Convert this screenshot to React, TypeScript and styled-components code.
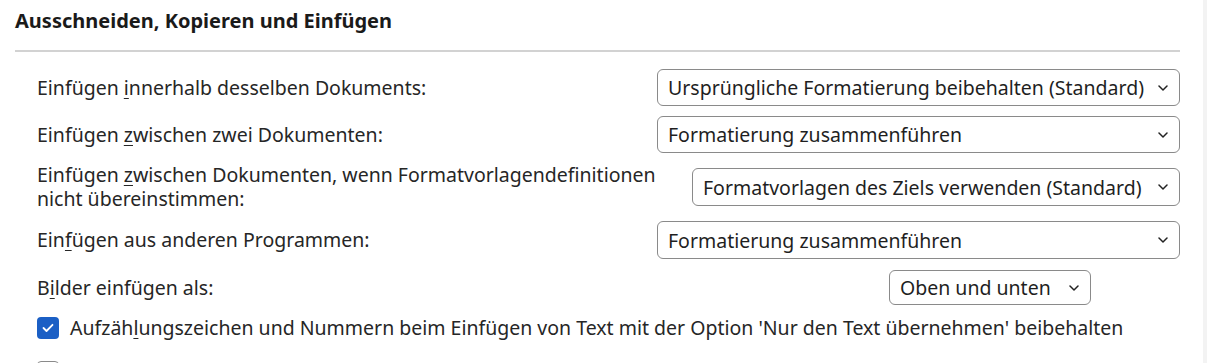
import React from "react";
import styled, { createGlobalStyle } from "styled-components";

const Global = createGlobalStyle`
  html, body { margin: 0; padding: 0; background: #ffffff; }
  body {
    font-family: "Noto Sans", "Open Sans", sans-serif;
    color: #1f1f1f;
    overflow: hidden;
  }
`;

const Page = styled.div`
  display: flex;
  width: 1207px;
  height: 363px;
  overflow: hidden;
`;

const Content = styled.div`
  flex: 1;
  padding: 0 23px 0 15px;
`;

const Gutter = styled.div`
  width: 4px;
  background: #f3f3f3;
`;

const Heading = styled.h2`
  margin: 0;
  padding-top: 8px;
  height: 33px;
  font-size: 20px;
  font-weight: 700;
  line-height: 26px;
  color: #1a1a1a;
`;

const Divider = styled.div`
  height: 2px;
  background: #d2d2d2;
  margin-top: 9px;
`;

const Rows = styled.div`
  display: flex;
  flex-direction: column;
  gap: 10px;
  padding: 17px 0 0 22px;
`;

const Row = styled.div<{ $endGap?: number }>`
  display: flex;
  align-items: center;
  justify-content: space-between;
  min-height: 37px;
  padding-right: ${(p) => p.$endGap ?? 0}px;
`;

const Label = styled.div<{ $maxWidth?: number }>`
  font-size: 19.5px;
  line-height: 24px;
  color: #262626;
  max-width: ${(p) => (p.$maxWidth ? `${p.$maxWidth}px` : "none")};
`;

const Key = styled.span`
  text-decoration: underline;
  text-underline-offset: 3px;
  text-decoration-thickness: 1px;
`;

const SelectBox = styled.div<{ $width: number; $height?: number }>`
  box-sizing: border-box;
  width: ${(p) => p.$width}px;
  height: ${(p) => p.$height ?? 37}px;
  border: 1.5px solid #8a8a8a;
  border-radius: 6px;
  display: flex;
  align-items: center;
  justify-content: space-between;
  padding: 0 11px 0 10px;
  font-size: 19.5px;
  color: #1f1f1f;
  background: #fff;
  white-space: nowrap;
`;

const Chevron = () => (
  <svg width="10" height="6" viewBox="0 0 10 6" fill="none">
    <path d="M1 1 L5 5 L9 1" stroke="#222" strokeWidth="1.5" strokeLinecap="round" strokeLinejoin="round" />
  </svg>
);

const CheckRow = styled.label<{ $top?: number }>`
  display: flex;
  align-items: center;
  gap: 11px;
  margin-top: ${(p) => p.$top ?? 0}px;
  font-size: 19.5px;
  line-height: 24px;
  color: #262626;
  white-space: nowrap;
`;

const Box = styled.span<{ $checked?: boolean }>`
  box-sizing: border-box;
  width: 22px;
  height: 22px;
  flex: none;
  border-radius: 4px;
  background: ${(p) => (p.$checked ? "#1b5fc5" : "#fff")};
  border: ${(p) => (p.$checked ? "none" : "1.5px solid #8a8a8a")};
  display: flex;
  align-items: center;
  justify-content: center;
`;

const Select = ({ value, width, height }: { value: string; width: number; height?: number }) => (
  <SelectBox $width={width} $height={height}>
    <span>{value}</span>
    <Chevron />
  </SelectBox>
);

export default function App() {
  return (
    <>
      <Global />
      <Page>
        <Content>
          <Heading>Ausschneiden, Kopieren und Einfügen</Heading>
          <Divider />
          <Rows>
            <Row>
              <Label>
                Einfügen <Key>i</Key>nnerhalb desselben Dokuments:
              </Label>
              <Select value="Ursprüngliche Formatierung beibehalten (Standard)" width={523} />
            </Row>
            <Row>
              <Label>
                Einfügen <Key>z</Key>wischen zwei Dokumenten:
              </Label>
              <Select value="Formatierung zusammenführen" width={523} />
            </Row>
            <Row>
              <Label $maxWidth={630}>
                Einfügen <Key>z</Key>wischen Dokumenten, wenn Formatvorlagendefinitionen nicht übereinstimmen:
              </Label>
              <Select value="Formatvorlagen des Ziels verwenden (Standard)" width={488} height={38} />
            </Row>
            <Row>
              <Label>
                Ein<Key>f</Key>ügen aus anderen Programmen:
              </Label>
              <Select value="Formatierung zusammenführen" width={523} height={38} />
            </Row>
            <Row $endGap={89}>
              <Label>
                B<Key>i</Key>lder einfügen als:
              </Label>
              <Select value="Oben und unten" width={202} height={35} />
            </Row>
            <CheckRow>
              <Box $checked>
                <svg width="12" height="10" viewBox="0 0 12 10" fill="none">
                  <path d="M1.5 5 L4.5 8 L10.5 1.8" stroke="#fff" strokeWidth="1.8" strokeLinecap="round" strokeLinejoin="round" />
                </svg>
              </Box>
              <span>
                Aufzäh<Key>l</Key>ungszeichen und Nummern beim Einfügen von Text mit der Option 'Nur den Text übernehmen' beibehalten
              </span>
            </CheckRow>
            <CheckRow $top={10}>
              <Box />
              <span>Intelligentes Ausschneiden und Einfügen verwenden</span>
            </CheckRow>
          </Rows>
        </Content>
        <Gutter />
      </Page>
    </>
  );
}
